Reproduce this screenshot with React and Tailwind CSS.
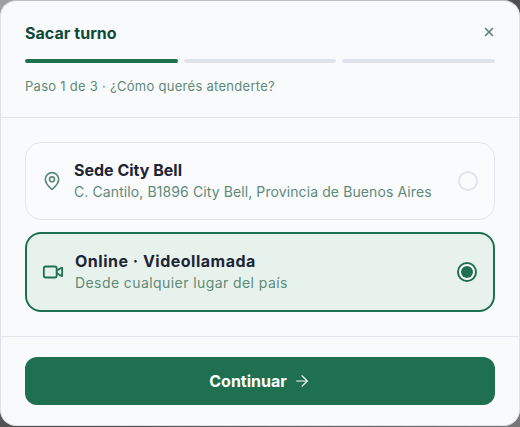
import { MapPin, Video, X, ArrowRight } from 'lucide-react';

export default function App() {
  return (
    <div className="h-[427px] w-[520px] overflow-hidden bg-[linear-gradient(135deg,#a0a0a0,#4a4a4a_50%,#777777)] font-['Inter',sans-serif]">
      <div className="flex h-[426px] w-[520px] flex-col rounded-2xl border border-[#dde1ea] border-t-[#bcbfc6] bg-[#f9fafc]">
        {/* Header */}
        <div className="h-[117px] shrink-0 border-b border-[#e2e5ec] px-6 pt-[22px]">
          <div className="flex items-center justify-between">
            <h2 className="text-base leading-5 font-bold tracking-[0.05px] text-[#0f4a38]">Sacar turno</h2>
            <X size={14} strokeWidth={3} className="translate-x-px -translate-y-px text-[#5c8a78]" />
          </div>
          <div className="mt-4 flex gap-1.5">
            <div className="h-1 flex-1 rounded-full bg-[#1f7050]" />
            <div className="h-1 flex-1 rounded-full bg-[#dfe3ec]" />
            <div className="h-1 flex-1 rounded-full bg-[#dfe3ec]" />
          </div>
          <p className="mt-[15px] text-[13px] leading-4 tracking-[0.28px] text-[#5e8a78]">Paso 1 de 3 · ¿Cómo querés atenderte?</p>
        </div>

        {/* Options */}
        <div className="flex h-[219px] shrink-0 flex-col gap-3 border-b border-[#e2e5ec] px-6 pt-6">
          <div className="flex h-[78px] items-center rounded-2xl border border-[#e2e5ec] bg-[#fafbfd] pr-4 pl-4">
            <MapPin size={20} strokeWidth={2} className="shrink-0 text-[#5e8a78]" />
            <div className="ml-3 min-w-0 flex-1">
              <p className="text-base leading-5 font-bold text-[#1c2536]">Sede City Bell</p>
              <p className="mt-0.5 text-sm leading-5 tracking-[0.1px] text-[#5e8a78]">C. Cantilo, B1896 City Bell, Provincia de Buenos Aires</p>
            </div>
            <div className="h-5 w-5 shrink-0 rounded-full border-2 border-[#dfe3ec]" />
          </div>

          <div className="flex h-[80px] items-center rounded-2xl border-2 border-[#1f7050] bg-[#e8f2ec] pr-4 pl-[15px]">
            <Video size={22} strokeWidth={2} className="shrink-0 text-[#1f7050]" />
            <div className="ml-[11px] min-w-0 flex-1">
              <p className="text-base leading-5 font-bold tracking-[0.5px] text-[#1c2536]">Online · Videollamada</p>
              <p className="mt-0.5 text-sm leading-5 tracking-[0.42px] text-[#5e8a78]">Desde cualquier lugar del país</p>
            </div>
            <div className="flex h-5 w-5 shrink-0 items-center justify-center rounded-full border-2 border-[#1f7050] bg-white">
              <div className="h-3 w-3 rounded-full bg-[#1f7050]" />
            </div>
          </div>
        </div>

        {/* Footer */}
        <div className="px-6 pt-5">
          <button className="flex h-12 w-full items-center justify-center gap-1.5 rounded-xl bg-[#1f7050] text-base font-bold text-white">
            Continuar
            <ArrowRight size={18} strokeWidth={1.5} />
          </button>
        </div>
      </div>
    </div>
  );
}
